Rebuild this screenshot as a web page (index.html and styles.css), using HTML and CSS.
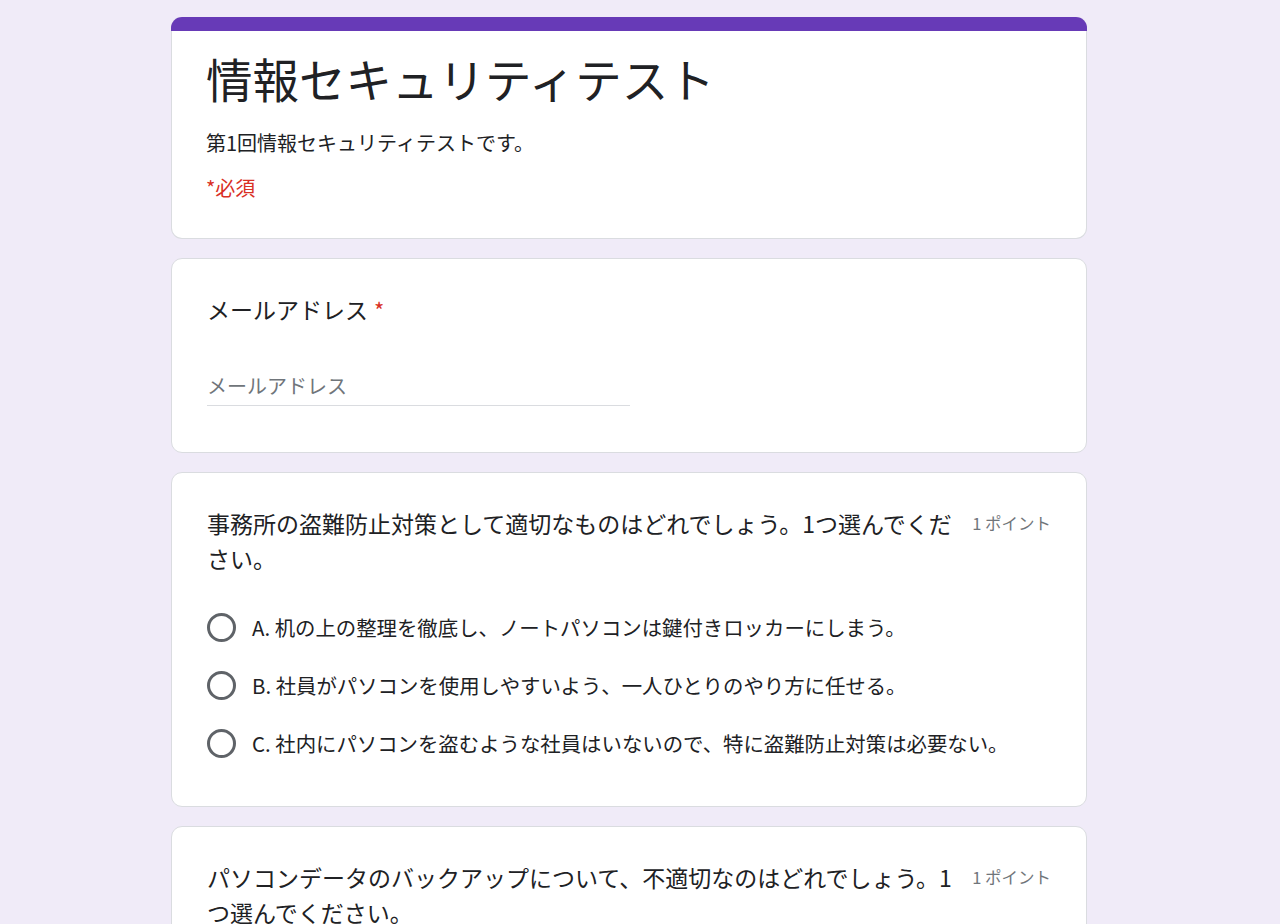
FILE: index.html
```html
<!DOCTYPE html>
<html lang="ja">
    <head>
        <meta charset="UTF-8"/>
        <meta name="viewport" content="width=device-width, initial-scale=1.0"/>
        <title>情報セキュリティテスト</title>
        <link rel="stylesheet" href="styles.css">
    </head>
    <body>
        <div class="form">
            <!-- ヘッダー -->
            <div class="card header">
                <div class="band"></div>
                <div class="header-body">
                    <h1 class="title">情報セキュリティテスト</h1>
                    <p class="desc">第1回情報セキュリティテストです。</p>
                    <p class="required">*必須</p>
                </div>
            </div>

            <!-- メールアドレス -->
            <div class="card email">
                <div class="label">メールアドレス<span class="star">*</span></div>
                <div class="input">メールアドレス</div>
            </div>

            <!-- 問1 -->
            <div class="card">
                <div class="q-head">
                    <div class="q-text">事務所の盗難防止対策として適切なものはどれでしょう。1つ選んでください。</div>
                    <div class="points">1 ポイント</div>
                </div>
                <div class="options">
                    <div class="option"><span class="radio"></span><span class="opt-text">A. 机の上の整理を徹底し、ノートパソコンは鍵付きロッカーにしまう。</span></div>
                    <div class="option"><span class="radio"></span><span class="opt-text">B. 社員がパソコンを使用しやすいよう、一人ひとりのやり方に任せる。</span></div>
                    <div class="option"><span class="radio"></span><span class="opt-text">C. 社内にパソコンを盗むような社員はいないので、特に盗難防止対策は必要ない。</span></div>
                </div>
            </div>

            <!-- 問2 -->
            <div class="card">
                <div class="q-head">
                    <div class="q-text">パソコンデータのバックアップについて、不適切なのはどれでしょう。1つ選んでください。</div>
                    <div class="points">1 ポイント</div>
                </div>
                <div class="options">
                    <div class="option"><span class="radio"></span><span class="opt-text">A. 定期的にバックアップを取る。</span></div>
                    <div class="option"><span class="radio"></span><span class="opt-text">B. バックアップは同じパソコンの中に保存する。</span></div>
                    <div class="option"><span class="radio"></span><span class="opt-text">C. バックアップしたデータが復元できるか確認する。</span></div>
                </div>
            </div>
        </div>
    </body>
</html>
```

FILE: styles.css
```css
*{margin: 0px; padding: 0px; box-sizing: border-box}
body{background-color: #f0ebf8; font-family: "Noto Sans CJK JP", "Noto Sans", sans-serif; color: #202124}

.form{width: 916px; margin-left: 171px; padding: 17px 0 40px; display: flex; flex-direction: column; gap: 19px}
.card{background-color: #fff; border: 1px solid #dadce0; border-radius: 11px; padding: 33px 35px 43px 35px}

.header{border-top: none; padding: 0}
.header .band{height: 14px; background-color: #673ab7; border-radius: 11px 11px 0 0; margin: 0 -1px}
.header-body{padding: 19px 35px 36px 34px}
.title{font-size: 46.5px; font-weight: 400; line-height: 56px}
.desc{font-size: 20px; line-height: 28px; margin-top: 23px}
.required{font-size: 20px; line-height: 28px; margin-top: 17px; color: #d93025}

.email{padding-bottom: 42px}
.card .label{font-size: 23px; line-height: 30px; margin-top: 2px}
.label .star{color: #d93025; margin-left: 6px; font-size: 22px}
.input{width: 423px; margin-top: 48px; font-size: 20px; line-height: 28px; padding-bottom: 5px; border-bottom: 1px solid #dadce0; color: #70757a}
.card .input{margin-bottom: 4px}

.q-head{display: flex; align-items: flex-start}
.q-text{width: 755px; font-size: 23px; line-height: 35px}
.points{margin-left: auto; font-size: 16.5px; line-height: 35px; color: #70757a; white-space: nowrap}

.options{margin-top: 31px; display: flex; flex-direction: column; gap: 18px}
.option{height: 40px; display: flex; align-items: center; gap: 16px}
.radio{width: 29px; height: 29px; border: 3px solid #5f6368; border-radius: 50%; flex: none}
.opt-text{font-size: 20.4px; line-height: 28px}
```
